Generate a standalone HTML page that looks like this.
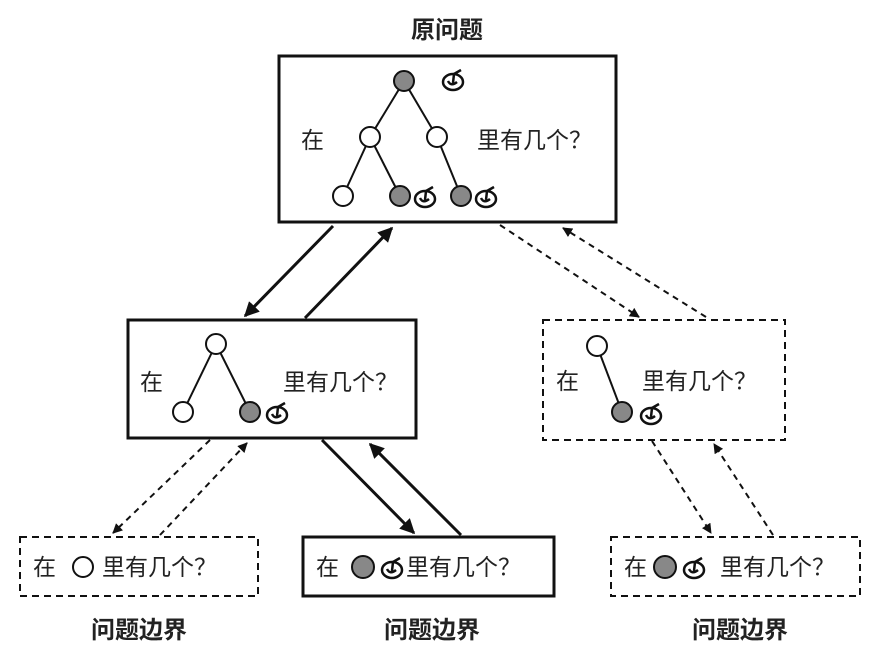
<!DOCTYPE html>
<html><head><meta charset="utf-8"><style>
html,body{margin:0;padding:0;background:#fff;}
svg{display:block}
text{font-family:"Liberation Sans","Noto Sans CJK SC",sans-serif;fill:#222}
.b{font-weight:bold;font-size:24px}
.t{font-size:23px}
</style></head><body>
<svg width="877" height="646" viewBox="0 0 877 646" xmlns="http://www.w3.org/2000/svg">
<defs>
<marker id="ah" viewBox="0 0 10 10" refX="9" refY="5" markerWidth="5" markerHeight="5" orient="auto"><path d="M0,0 L10,5 L0,10 z" fill="#111"/></marker>
<g id="ap"><ellipse cx="0" cy="2" rx="10" ry="8" fill="#fff" stroke="#111" stroke-width="2.5"/><path d="M-5,1 Q-2,7 4,2" fill="none" stroke="#111" stroke-width="2.5"/><path d="M0,3 L1,-6 M1,-6 L8,-10" stroke="#111" stroke-width="2.5" fill="none"/></g>
<circle id="w" r="10" fill="#fff" stroke="#111" stroke-width="2"/>
<circle id="g" r="10" fill="#888" stroke="#111" stroke-width="2"/>
</defs>
<text class="b" x="447" y="38" text-anchor="middle">原问题</text>
<rect x="279" y="56" width="337" height="166" fill="none" stroke="#111" stroke-width="3"/>
<g stroke="#111" stroke-width="2"><line x1="404" y1="81" x2="370" y2="137"/><line x1="404" y1="81" x2="437" y2="137"/><line x1="370" y1="137" x2="343" y2="196"/><line x1="370" y1="137" x2="400" y2="196"/><line x1="437" y1="137" x2="461" y2="196"/></g>
<use href="#g" x="404" y="81"/><use href="#w" x="370" y="137"/><use href="#w" x="437" y="137"/><use href="#w" x="343" y="196"/><use href="#g" x="400" y="196"/><use href="#g" x="461" y="196"/>
<use href="#ap" x="453" y="80"/><use href="#ap" x="425" y="197"/><use href="#ap" x="486" y="197"/>
<text class="t" x="301" y="148">在</text><text class="t" x="477" y="148">里有几个？</text>
<rect x="128" y="320" width="288" height="118" fill="none" stroke="#111" stroke-width="3"/>
<g stroke="#111" stroke-width="2"><line x1="216" y1="344" x2="183" y2="412"/><line x1="216" y1="344" x2="250" y2="412"/></g>
<use href="#w" x="216" y="344"/><use href="#w" x="183" y="412"/><use href="#g" x="250" y="412"/><use href="#ap" x="277" y="413"/>
<text class="t" x="140" y="390">在</text><text class="t" x="283" y="390">里有几个？</text>
<rect x="543" y="320" width="242" height="120" fill="none" stroke="#111" stroke-width="2" stroke-dasharray="7,5"/>
<line x1="597" y1="346" x2="622" y2="412" stroke="#111" stroke-width="2"/>
<use href="#w" x="597" y="346"/><use href="#g" x="622" y="412"/><use href="#ap" x="651" y="414"/>
<text class="t" x="556" y="389">在</text><text class="t" x="642" y="389">里有几个？</text>
<rect x="20" y="537" width="238" height="59" fill="none" stroke="#111" stroke-width="2" stroke-dasharray="7,5"/>
<text class="t" x="33" y="575">在</text><circle cx="83" cy="567" r="10" fill="#fff" stroke="#111" stroke-width="2"/><text class="t" x="102" y="575">里有几个？</text>
<rect x="303" y="537" width="251" height="59" fill="none" stroke="#111" stroke-width="3"/>
<text class="t" x="316" y="575">在</text><circle cx="363" cy="567" r="11" fill="#888" stroke="#111" stroke-width="2"/><use href="#ap" x="392" y="568"/><text class="t" x="406" y="575">里有几个？</text>
<rect x="611" y="537" width="249" height="59" fill="none" stroke="#111" stroke-width="2" stroke-dasharray="7,5"/>
<text class="t" x="624" y="575">在</text><circle cx="665" cy="567" r="11" fill="#888" stroke="#111" stroke-width="2"/><use href="#ap" x="694" y="568"/><text class="t" x="720" y="575">里有几个？</text>
<text class="b" x="139" y="638" text-anchor="middle">问题边界</text>
<text class="b" x="432" y="638" text-anchor="middle">问题边界</text>
<text class="b" x="740" y="638" text-anchor="middle">问题边界</text>
<g stroke="#111" stroke-width="3" marker-end="url(#ah)">
<line x1="333" y1="226" x2="245" y2="316"/><line x1="305" y1="318" x2="392" y2="228"/>
<line x1="322" y1="440" x2="414" y2="533"/><line x1="461" y1="535" x2="370" y2="444"/>
</g>
<g stroke="#111" stroke-width="2" stroke-dasharray="6,5" marker-end="url(#ah)">
<line x1="500" y1="225" x2="639" y2="317"/><line x1="706" y1="317" x2="563" y2="228"/>
<line x1="210" y1="440" x2="113" y2="533"/><line x1="160" y1="535" x2="247" y2="443"/>
<line x1="652" y1="441" x2="711" y2="533"/><line x1="773" y1="535" x2="714" y2="444"/>
</g>
</svg>
</body></html>
